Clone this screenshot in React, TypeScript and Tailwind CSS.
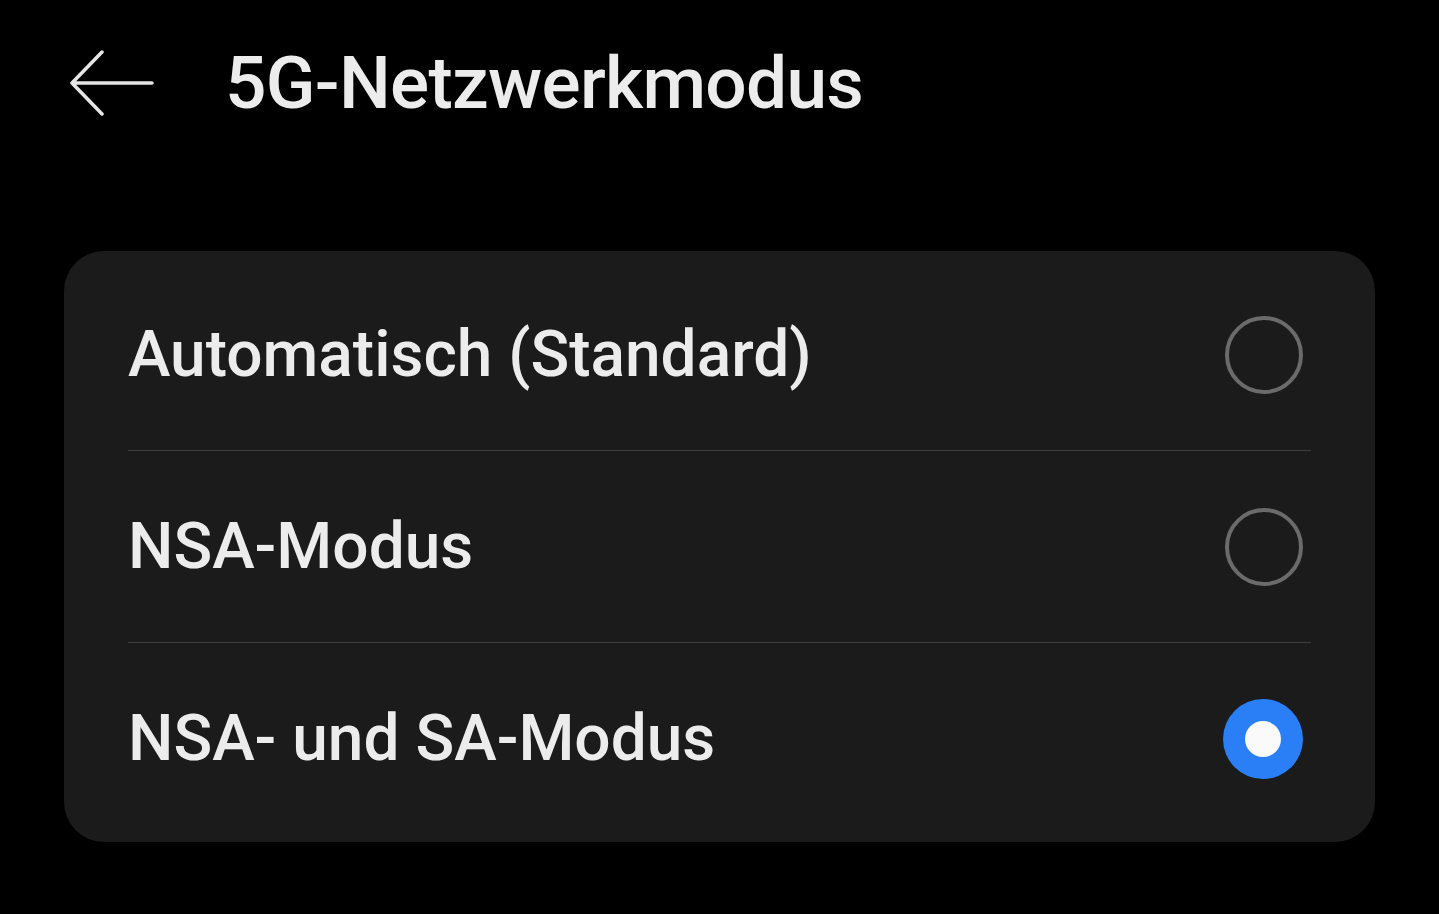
const options = [
  { label: 'Automatisch (Standard)', selected: false },
  { label: 'NSA-Modus', selected: false },
  { label: 'NSA- und SA-Modus', selected: true },
];

function Radio({ checked }: { checked: boolean }) {
  if (checked) {
    return (
      <div className="w-[80px] h-[80px] rounded-full bg-[#2a7ff6] flex items-center justify-center">
        <div className="w-[36px] h-[36px] rounded-full bg-[#fafafa]" />
      </div>
    );
  }
  return <div className="w-[78px] h-[78px] rounded-full border-[4px] border-[#6b6b6b]" />;
}

export default function App() {
  return (
    <div
      className="w-[1439px] h-[914px] bg-black text-[#ececec] overflow-hidden"
      style={{ fontFamily: 'Roboto, "Noto Sans", sans-serif' }}
    >
      <header className="flex items-center h-[170px] pl-[70px] pb-[4px]">
        <button aria-label="Back" className="w-[84px] h-[66px] flex items-center">
          <svg width="84" height="66" viewBox="0 0 84 66" fill="none">
            <path
              d="M32 2 L2 33 L32 64 M2 33 H82"
              stroke="#e6e6e6"
              strokeWidth="3.5"
              strokeLinecap="round"
              strokeLinejoin="round"
            />
          </svg>
        </button>
        <h1 className="ml-[71px] text-[73px] font-medium tracking-[-0.7px] leading-none">
          5G-Netzwerkmodus
        </h1>
      </header>

      <div className="mt-[81px] mx-[64px] bg-[#1b1b1b] rounded-[40px] px-[64px] pt-[8px] pb-[7px]">
        {options.map((opt, i) => (
          <div
            key={opt.label}
            className={
              'flex items-center justify-between h-[192px] ' +
              (i < options.length - 1 ? 'border-b border-[#3e3e3e]' : '')
            }
          >
            <span className="text-[64px] font-medium leading-none">{opt.label}</span>
            <div className="mr-[8px]">
              <Radio checked={opt.selected} />
            </div>
          </div>
        ))}
      </div>
    </div>
  );
}
